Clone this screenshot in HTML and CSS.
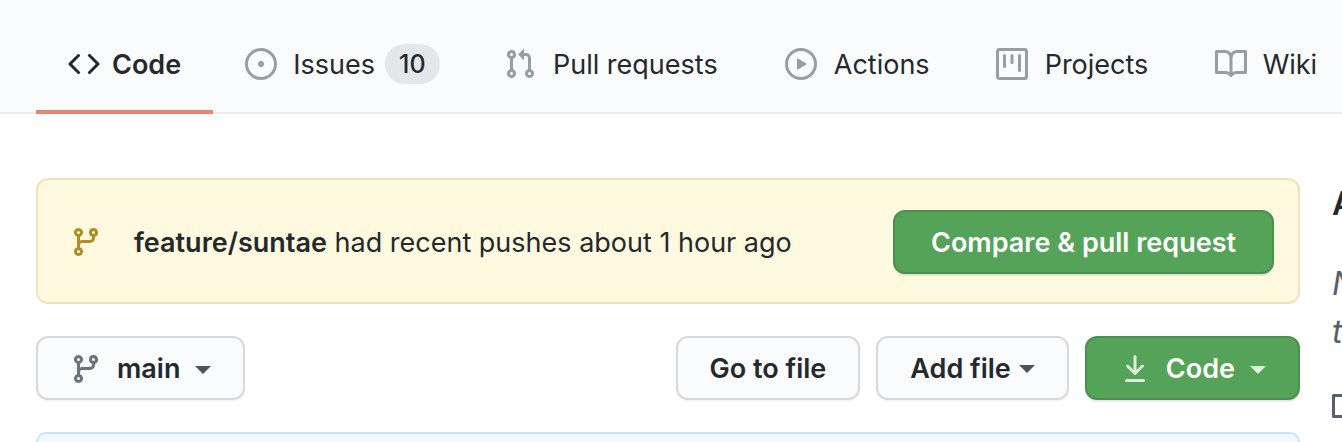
FILE: index.html
```html
<!DOCTYPE html>
<html lang="en">
<head>
    <meta charset="UTF-8">
    <meta name="viewport" content="width=device-width, initial-scale=1.0">
    <title>Code</title>
    <link rel="stylesheet" href="styles.css">
</head>
<body>
    <nav class="tabs">
        <a class="tab selected" href="#">
            <svg class="icon" viewBox="0 0 16 16"><path d="M4.72 3.22a.75.75 0 011.06 1.06L2.06 8l3.72 3.72a.75.75 0 11-1.06 1.06L.47 8.53a.75.75 0 010-1.06l4.25-4.25zm6.56 0a.75.75 0 10-1.06 1.06L13.94 8l-3.72 3.72a.75.75 0 101.06 1.06l4.25-4.25a.75.75 0 000-1.06l-4.25-4.25z"/></svg>
            <span class="tab-label">Code</span>
        </a>
        <a class="tab" href="#">
            <svg class="icon" viewBox="0 0 16 16"><path fill-rule="evenodd" d="M8 1.5a6.5 6.5 0 100 13 6.5 6.5 0 000-13zM0 8a8 8 0 1116 0A8 8 0 010 8z"/><circle cx="8" cy="8" r="1.5"/></svg>
            <span class="tab-label" data-content="Issues">Issues</span>
            <span class="counter">10</span>
        </a>
        <a class="tab" href="#">
            <svg class="icon" viewBox="0 0 16 16"><path fill-rule="evenodd" d="M7.177 3.073L9.573.677A.25.25 0 0110 .854v4.792a.25.25 0 01-.427.177L7.177 3.427a.25.25 0 010-.354zM3.75 2.5a.75.75 0 100 1.5.75.75 0 000-1.5zm-2.25.75a2.25 2.25 0 113 2.122v5.256a2.251 2.251 0 11-1.5 0V5.372A2.25 2.25 0 011.5 3.25zM11 2.5h-1V4h1a1 1 0 011 1v5.628a2.251 2.251 0 101.5 0V5A2.5 2.5 0 0011 2.5zm1 10.25a.75.75 0 111.5 0 .75.75 0 01-1.5 0zM3.75 12a.75.75 0 100 1.5.75.75 0 000-1.5z"/></svg>
            <span class="tab-label" data-content="Pull requests">Pull requests</span>
        </a>
        <a class="tab" href="#">
            <svg class="icon" viewBox="0 0 16 16"><path fill-rule="evenodd" d="M1.5 8a6.5 6.5 0 1113 0 6.5 6.5 0 01-13 0zM8 0a8 8 0 100 16A8 8 0 008 0zM6.379 5.227A.25.25 0 006 5.442v5.117a.25.25 0 00.379.214l4.264-2.559a.25.25 0 000-.428L6.379 5.227z"/></svg>
            <span class="tab-label" data-content="Actions">Actions</span>
        </a>
        <a class="tab" href="#">
            <svg class="icon" viewBox="0 0 16 16"><path fill-rule="evenodd" d="M1.75 0A1.75 1.75 0 000 1.75v12.5C0 15.216.784 16 1.75 16h12.5A1.75 1.75 0 0016 14.25V1.75A1.75 1.75 0 0014.25 0H1.75zM1.5 1.75a.25.25 0 01.25-.25h12.5a.25.25 0 01.25.25v12.5a.25.25 0 01-.25.25H1.75a.25.25 0 01-.25-.25V1.75zM11.75 3a.75.75 0 00-.75.75v7.5a.75.75 0 001.5 0v-7.5a.75.75 0 00-.75-.75zm-8.25.75a.75.75 0 011.5 0v5.5a.75.75 0 01-1.5 0v-5.5zM8 3a.75.75 0 00-.75.75v3.5a.75.75 0 001.5 0v-3.5A.75.75 0 008 3z"/></svg>
            <span class="tab-label" data-content="Projects">Projects</span>
        </a>
        <a class="tab" href="#">
            <svg class="icon" viewBox="0 0 16 16"><path fill-rule="evenodd" d="M0 1.75A.75.75 0 01.75 1h4.253c1.227 0 2.317.59 3 1.501A3.744 3.744 0 0111.006 1h4.245a.75.75 0 01.75.75v10.5a.75.75 0 01-.75.75h-4.507a2.25 2.25 0 00-1.591.659l-.622.621a.75.75 0 01-1.06 0l-.622-.621A2.25 2.25 0 005.258 13H.75a.75.75 0 01-.75-.75V1.75zm8.755 3a2.25 2.25 0 012.25-2.25H14.5v9h-3.757c-.71 0-1.4.201-1.992.572l.004-7.322zm-1.504 7.324l.004-5.073-.002-2.253A2.25 2.25 0 005.003 2.5H1.5v9h3.757a3.75 3.75 0 011.994.574z"/></svg>
            <span class="tab-label" data-content="Wiki">Wiki</span>
        </a>
    </nav>

    <div class="layout">
        <main class="content">
            <div class="notice">
                <svg class="icon" viewBox="0 0 16 16"><path fill-rule="evenodd" d="M11.75 2.5a.75.75 0 100 1.5.75.75 0 000-1.5zm-2.25.75a2.25 2.25 0 113 2.122V6A2.5 2.5 0 0110 8.5H6a1 1 0 00-1 1v1.128a2.251 2.251 0 11-1.5 0V5.372a2.25 2.25 0 111.5 0v1.836A2.492 2.492 0 016 7h4a1 1 0 001-1v-.628A2.25 2.25 0 019.5 3.25zM4.25 12a.75.75 0 100 1.5.75.75 0 000-1.5zM3.5 3.25a.75.75 0 111.5 0 .75.75 0 01-1.5 0z"/></svg>
                <p class="notice-text"><strong>feature/suntae</strong> had recent pushes about 1 hour ago</p>
                <button class="btn btn-primary btn-compare" type="button">Compare &amp; pull request</button>
            </div>

            <div class="toolbar">
                <button class="btn btn-branch" type="button">
                    <svg class="icon" viewBox="0 0 16 16"><path fill-rule="evenodd" d="M11.75 2.5a.75.75 0 100 1.5.75.75 0 000-1.5zm-2.25.75a2.25 2.25 0 113 2.122V6A2.5 2.5 0 0110 8.5H6a1 1 0 00-1 1v1.128a2.251 2.251 0 11-1.5 0V5.372a2.25 2.25 0 111.5 0v1.836A2.492 2.492 0 016 7h4a1 1 0 001-1v-.628A2.25 2.25 0 019.5 3.25zM4.25 12a.75.75 0 100 1.5.75.75 0 000-1.5zM3.5 3.25a.75.75 0 111.5 0 .75.75 0 01-1.5 0z"/></svg>
                    <span>main</span>
                    <span class="caret"></span>
                </button>
                <button class="btn" type="button">Go to file</button>
                <button class="btn btn-add" type="button">
                    <span>Add file</span>
                    <span class="caret"></span>
                </button>
                <button class="btn btn-primary" type="button">
                    <svg class="icon" viewBox="0 0 16 16"><path d="M7.47 10.78a.75.75 0 001.06 0l3.75-3.75a.75.75 0 00-1.06-1.06L8.75 8.44V1.75a.75.75 0 00-1.5 0v6.69L4.78 5.97a.75.75 0 00-1.06 1.06l3.75 3.75zM3.75 13a.75.75 0 000 1.5h8.5a.75.75 0 000-1.5h-8.5z"/></svg>
                    <span>Code</span>
                    <span class="caret"></span>
                </button>
            </div>

            <div class="commit-box"></div>
        </main>

        <aside class="sidebar">
            <h2>About</h2>
            <p>No description, website, or<br>topics provided.</p>
            <svg class="icon" viewBox="0 0 16 16"><path fill-rule="evenodd" d="M0 1.75A.75.75 0 01.75 1h4.253c1.227 0 2.317.59 3 1.501A3.744 3.744 0 0111.006 1h4.245a.75.75 0 01.75.75v10.5a.75.75 0 01-.75.75h-4.507a2.25 2.25 0 00-1.591.659l-.622.621a.75.75 0 01-1.06 0l-.622-.621A2.25 2.25 0 005.258 13H.75a.75.75 0 01-.75-.75V1.75zm8.755 3a2.25 2.25 0 012.25-2.25H14.5v9h-3.757c-.71 0-1.4.201-1.992.572l.004-7.322zm-1.504 7.324l.004-5.073-.002-2.253A2.25 2.25 0 005.003 2.5H1.5v9h3.757a3.75 3.75 0 011.994.574z"/></svg>
        </aside>
    </div>
</body>
</html>
```

FILE: styles.css
```css
* {
    box-sizing: border-box;
}

html,
body {
    overflow: hidden;
}

body {
    margin: 0;
    font-family: Inter, "Liberation Sans", sans-serif;
    font-size: 27px;
    line-height: 40px;
    color: #24292e;
    background-color: #fff;
}

h2, p {
    margin: 0;
}

.icon {
    flex: none;
    display: block;
    width: 32px;
    height: 32px;
    fill: currentColor;
}

/* Repository tabs */
.tabs {
    display: flex;
    padding: 16px 0 0 36px;
    background-color: #fafbfc;
    box-shadow: inset 0 -2px #eaecef;
}

.tab {
    flex: none;
    display: flex;
    align-items: center;
    gap: 14px;
    height: 98px;
    padding: 2px 32px 0;
    border-bottom: 4px solid transparent;
    color: #24292e;
    text-decoration: none;
    white-space: nowrap;
}

.tab .icon {
    color: #959da5;
}

.tab-label {
    padding-top: 2px;
    text-align: center;
}

.tab-label[data-content]::after {
    content: attr(data-content);
    display: block;
    height: 0;
    font-weight: 700;
    visibility: hidden;
}

.tab.selected {
    gap: 12px;
    border-bottom-color: #ec8370;
    font-weight: 600;
}

.tab.selected .icon {
    color: #24292e;
}

.counter {
    margin-left: -6px;
    padding: 0 14px;
    border-radius: 20px;
    background-color: #e4e7ea;
    font-size: 25px;
    font-weight: 500;
}

/* Content */
.layout {
    display: flex;
    gap: 32px;
    padding: 64px 0 0 36px;
}

.content {
    flex: 1;
    min-width: 0;
}

.notice {
    display: flex;
    align-items: center;
    padding: 30px 24px 28px 32px;
    border: 2px solid #f0e3b8;
    border-radius: 12px;
    background-color: #fff9df;
}

.notice .icon {
    color: #b08c26;
}

.notice-text {
    flex: 1;
    padding: 2px 0 0 32px;
}

.notice-text strong {
    font-weight: 600;
}

.toolbar {
    display: flex;
    gap: 16px;
    margin: 32px 0;
}

.btn {
    display: flex;
    align-items: center;
    gap: 15px;
    padding: 11px 32px 9px;
    border: 2px solid #d7d9db;
    border-radius: 12px;
    background-color: #fafbfc;
    box-shadow: 0 2px 0 rgba(27, 31, 35, 0.04);
    color: #24292e;
    font: inherit;
    font-weight: 600;
    white-space: nowrap;
    cursor: pointer;
}

.btn-branch {
    margin-right: auto;
}

.btn-branch .icon {
    color: #6a737d;
}

.btn-primary {
    border-color: #4a9150;
    background-color: #55a358;
    box-shadow: 0 2px 0 rgba(27, 31, 35, 0.1);
    color: #fff;
}

.btn-compare {
    padding-left: 36px;
    padding-right: 36px;
}

.btn-primary .icon {
    opacity: 0.8;
}

.caret {
    margin-top: 2px;
    border: 8px solid transparent;
    border-top-color: currentColor;
    border-bottom-width: 0;
    opacity: 0.8;
}

.btn-add {
    gap: 8px;
}

.btn-add .caret {
    margin-top: 0;
}

.commit-box {
    height: 10px;
    border: 2px solid #c8e1ff;
    border-bottom: 0;
    border-radius: 12px 12px 0 0;
    background-color: #f1f8ff;
}

/* Sidebar runs off the right edge */
.sidebar {
    width: 10px;
    padding-top: 2px;
    white-space: nowrap;
    color: #586069;
}

.sidebar h2 {
    margin-bottom: 32px;
    color: #24292e;
    font-size: 32px;
    font-weight: 600;
    line-height: 48px;
}

.sidebar p {
    margin-bottom: 36px;
    font-size: 32px;
    font-style: italic;
    line-height: 48px;
}
```
